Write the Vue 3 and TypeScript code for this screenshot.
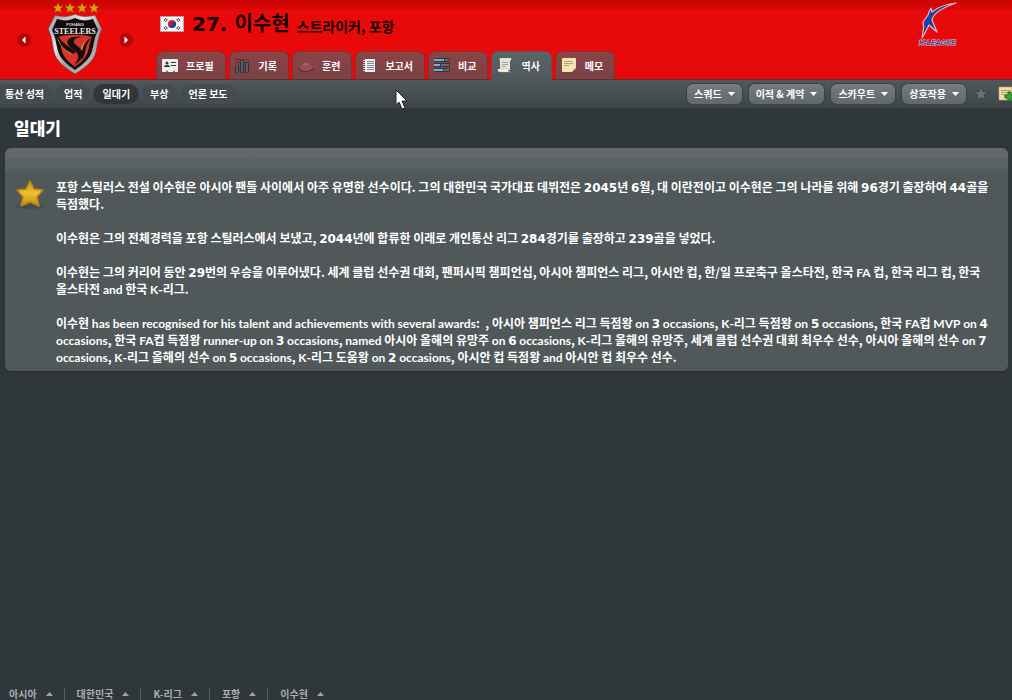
<script setup lang="ts">
interface Tab {
  id: string
  label: string
}
interface Run {
  kind: 'plain' | 'latin' | 'digit'
  text: string
}

const tabs: Tab[] = [
  { id: 'profile', label: '프로필' },
  { id: 'record', label: '기록' },
  { id: 'training', label: '훈련' },
  { id: 'report', label: '보고서' },
  { id: 'compare', label: '비교' },
  { id: 'history', label: '역사' },
  { id: 'memo', label: '메모' },
]
const activeTab = 'history'

const sections: string[] = ['통산 성적', '업적', '일대기', '부상', '언론 보도']
const activeSection = '일대기'

const actions: string[] = ['스쿼드', '이적 & 계약', '스카우트', '상호작용']
const crumbs: string[] = ['아시아', '대한민국', 'K-리그', '포항', '이수현']

const paragraphs: string[][] = [
  [
    '포항 스틸러스 전설 이수현은 아시아 팬들 사이에서 아주 유명한 선수이다. 그의 대한민국 국가대표 데뷔전은 2045년 6월, 대 이란전이고 이수현은 그의 나라를 위해 96경기 출장하여 44골을',
    '득점했다.',
  ],
  ['이수현은 그의 전체경력을 포항 스틸러스에서 보냈고, 2044년에 합류한 이래로 개인통산 리그 284경기를 출장하고 239골을 넣었다.'],
  [
    '이수현는 그의 커리어 동안 29번의 우승을 이루어냈다. 세계 클럽 선수권 대회, 팬퍼시픽 챔피언십, 아시아 챔피언스 리그, 아시안 컵, 한/일 프로축구 올스타전, 한국 FA 컵, 한국 리그 컵, 한국',
    '올스타전 and 한국 K-리그.',
  ],
  [
    '이수현 has been recognised for his talent and achievements with several awards:  , 아시아 챔피언스 리그 득점왕 on 3 occasions, K-리그 득점왕 on 5 occasions, 한국 FA컵 MVP on 4',
    'occasions, 한국 FA컵 득점왕 runner-up on 3 occasions, named 아시아 올해의 유망주 on 6 occasions, K-리그 올해의 유망주, 세계 클럽 선수권 대회 최우수 선수, 아시아 올해의 선수 on 7',
    'occasions, K-리그 올해의 선수 on 5 occasions, K-리그 도움왕 on 2 occasions, 아시안 컵 득점왕 and 아시안 컵 최우수 선수.',
  ],
]

function runs(line: string): Run[] {
  return line
    .split(/([A-Za-z]+(?:-[a-z]+)?|[0-9]+)/)
    .filter((t) => t !== '')
    .map((text) => ({
      text,
      kind: /^[0-9]/.test(text) ? 'digit' : /^[A-Za-z]/.test(text) ? 'latin' : 'plain',
    }))
}

const starPoints = '0,-5 1.4,-1.7 5,-1.5 2.2,0.8 3.1,4.4 0,2.4 -3.1,4.4 -2.2,0.8 -5,-1.5 -1.4,-1.7'
</script>

<template>
  <div class="page">
    <header class="banner">
      <div class="club">
        <button class="step" aria-label="이전 선수">
          <svg width="14" height="14" viewBox="0 0 14 14"><path d="M8.5 3.5v7L5 7z" fill="#fff" /></svg>
        </button>
        <svg class="crest" width="58" height="74" viewBox="0 0 58 74" role="img" aria-label="Pohang Steelers">
          <defs>
            <linearGradient id="steel" x1="0" y1="0" x2="1" y2="1">
              <stop offset="0" stop-color="#8d9498" />
              <stop offset=".35" stop-color="#e4e7e9" />
              <stop offset=".6" stop-color="#9a9fa3" />
              <stop offset="1" stop-color="#c9ccce" />
            </linearGradient>
          </defs>
          <g fill="#d9a514" stroke="#a0700a" stroke-width=".4">
            <polygon v-for="n in 4" :key="n" :points="starPoints" :transform="`translate(${n * 12} 8)`" />
          </g>
          <path d="M29 14C23 17 16 17 9 15L2 29c4 8 4 14 6 23 2 9 11 16 21 22 10-6 19-13 21-22 2-9 2-15 6-23L49 15c-7 2-14 2-20-1z" fill="url(#steel)" stroke="#8c2020" stroke-width=".6" />
          <path d="M29 18c-6 3-12 3-18 1L6 30c4 8 4 14 6 21 2 8 9 13 17 19 8-6 15-11 17-19 2-7 2-13 6-21l-5-11c-6 2-12 2-18-1z" fill="#120c0c" />
          <path d="M12 37c9-3 25-3 34 0-3 7-3 13-5 17-2 5-7 9-12 13-5-4-10-8-12-13-2-4-2-10-5-17z" fill="#d8332c" />
          <path d="M11 37c3 7 11 10 17 15l-3 2c-7-4-12-9-14-17zM46 37c-5 4-8 8-8 15l-4 8c-1-11 2-18 12-23z" fill="#d89a25" />
          <path d="M12 36c5 8 12 11 18 16l-3 2C17 49 13 44 12 36zM36 37c-7 0-10 4-7 7l5 4c5 5 3 11-4 16l-2 2c5-8 6-11 1-15l-5-4c-6-6-1-12 12-10zM46 37c-4 4-6 9-7 16l-3 7c-1-10 1-18 10-23z" fill="#170d0b" />
          <text x="29" y="26" text-anchor="middle" class="crest-top">POHANG</text>
          <text x="29" y="34" text-anchor="middle" class="crest-name">STEELERS</text>
        </svg>
        <button class="step" aria-label="다음 선수">
          <svg width="14" height="14" viewBox="0 0 14 14"><path d="M5.5 3.5v7L9 7z" fill="#fff" /></svg>
        </button>
      </div>

      <div class="identity">
        <div class="heading">
          <svg class="flag" width="24" height="16" viewBox="0 0 24 16" role="img" aria-label="대한민국">
            <rect x=".5" y=".5" width="23" height="15" fill="#f4f4f4" stroke="#b9a9a9" />
            <path d="M8 8a4 4 0 0 1 8 0z" fill="#d5202c" />
            <path d="M8 8a4 4 0 0 0 8 0z" fill="#1d3f8d" />
            <circle cx="10" cy="8" r="2" fill="#d5202c" />
            <circle cx="14" cy="8" r="2" fill="#1d3f8d" />
            <path d="M4 5l2-3M5.5 6l2-3M4 11l2 3M5.5 10l2 3M18 2l2 3M16.5 3l2 3M18 14l2-3M16.5 13l2-3" stroke="#444" />
          </svg>
          <h1>27. 이수현</h1>
          <span class="role">스트라이커, 포항</span>
        </div>
        <nav class="tabs">
          <button v-for="t in tabs" :key="t.id" class="tab" :class="{ active: t.id === activeTab }">
            <svg class="tab-icon" width="18" height="18" viewBox="0 0 18 18" aria-hidden="true">
              <g v-if="t.id === 'profile'">
                <path d="M2 2h14q1 0 1 1v11q0 1-1 1h-2l-1-2-1 2H7l-1-2-1 2H2q-1 0-1-1V3q0-1 1-1z" fill="#eceded" />
                <circle cx="6" cy="6" r="1.5" fill="#333" />
                <path d="M3 10q0-2 3-2t3 2zM10 5h5v1h-5zM10 8h5v1h-5z" fill="#333" />
              </g>
              <g v-else-if="t.id === 'record'">
                <path d="M1 2.5h14M1 5.5h14" stroke="#5f2f31" />
                <rect x="1.5" y="8.5" width="3" height="7" rx="1" fill="#596063" stroke="#2b2f31" />
                <rect x="6.5" y="3.5" width="3" height="12" rx="1" fill="#596063" stroke="#2b2f31" />
                <rect x="11.5" y="5.5" width="3" height="10" rx="1" fill="#596063" stroke="#2b2f31" />
              </g>
              <g v-else-if="t.id === 'training'">
                <ellipse cx="9" cy="12" rx="8" ry="3" fill="#6b3033" />
                <path d="M2 11q2-3 5-5 2-1 4 0 3 2 5 5-3 3-7 3t-7-3z" fill="#985054" />
                <path d="M6 7q3-2 6 0-3 2-6 0z" fill="#ad686a" />
              </g>
              <g v-else-if="t.id === 'report'">
                <path d="M5 2h10v13H5z" fill="#eef0ef" />
                <path d="M7 4.5h7M7 6.5h7M7 8.5h7M7 10.5h7M7 12.5h7" stroke="#858b8e" />
                <path d="M3 3.5h2M3 5.5h2M3 7.5h2M3 9.5h2M3 11.5h2M3 13.5h2" stroke="#c4c8c9" />
              </g>
              <g v-else-if="t.id === 'compare'">
                <rect x="1" y="1" width="16" height="4" rx="1" fill="#303537" />
                <rect x="1" y="6" width="16" height="4" rx="1" fill="#303537" />
                <rect x="1" y="11" width="16" height="4" rx="1" fill="#303537" />
                <path d="M1 2h10v2H1zM1 7h6v2H1zM1 12h9v2H1z" fill="#7fa9d6" />
                <path d="M12 2h4v2h-4zM8 7h8v2H8zM11 12h5v2h-5z" fill="#656c70" />
              </g>
              <g v-else-if="t.id === 'history'">
                <path d="M4 1h11q1 2-1 3v9H4V4Q3 3 4 1z" fill="#e6e3d8" />
                <path d="M2 12h10q0 3 2 3H4q-3 0-2-3z" fill="#f7f3e6" stroke="#b1aea2" stroke-width=".4" />
                <path d="M6 5.500h6M6 7.500h6M6 9.500h4" stroke="#a3a49c" />
              </g>
              <g v-else>
                <path d="M3 1h12q1 0 1 1v9l-4 4H3q-1 0-1-1V2q0-1 1-1z" fill="#f3e4b3" />
                <path d="M12 15q1-3 4-4z" fill="#c9b57b" />
                <path d="M4 4.5h9M4 6.5h9M4 8.5h5" stroke="#b7a46f" />
              </g>
            </svg>
            <span>{{ t.label }}</span>
          </button>
        </nav>
      </div>

      <svg class="league" width="42" height="48" viewBox="0 0 42 48" role="img" aria-label="K-League">
        <path d="M38 2C29 3 20 6 14 11l-1-4-2 4-1 3-5 7c1 4 1 7 0 10l-1 6c3-4 4-8 7-13l8 7-5-12c1-7 10-12 24-17z" fill="#1e3fa0" stroke="#e9bcc4" stroke-width="1.2" stroke-linejoin="round" />
        <text x="1" y="44" class="league-name">K-LEAGUE</text>
      </svg>
    </header>

    <div class="toolbar">
      <nav class="sections">
        <button v-for="s in sections" :key="s" class="section" :class="{ active: s === activeSection }">{{ s }}</button>
      </nav>
      <div class="actions">
        <button v-for="a in actions" :key="a" class="action">
          <span>{{ a }}</span>
          <svg width="7" height="4" viewBox="0 0 7 4" aria-hidden="true"><path d="M0 0h7L3.5 4z" fill="#fff" /></svg>
        </button>
        <button class="bare" aria-label="즐겨찾기">
          <svg width="16" height="16" viewBox="-6 -6 12 12"><polygon :points="starPoints" fill="#6d7477" stroke="#353c3f" stroke-width=".5" /></svg>
        </button>
        <button class="bare note" aria-label="메모 추가">
          <svg width="18" height="16" viewBox="0 0 18 16">
            <path d="M1 1h13v13H1z" fill="#f2dda3" stroke="#bda66a" stroke-width=".6" />
            <path d="M3 4.5h9M3 6.5h7M3 8.5h5" stroke="#b79f63" />
            <path d="M10 6h3v3h3v3h-3v3h-3v-3H7V9h3z" fill="#2fae3c" stroke="#126a1d" />
          </svg>
        </button>
      </div>
    </div>

    <main class="content">
      <h2>일대기</h2>
      <article class="panel">
        <svg class="gold-star" width="30" height="32" viewBox="1 0 30 32" aria-hidden="true">
          <defs>
            <linearGradient id="gold" x1="0" y1="0" x2="0" y2="1">
              <stop offset="0" stop-color="#c99a12" />
              <stop offset=".5" stop-color="#ebc030" />
              <stop offset="1" stop-color="#c58a06" />
            </linearGradient>
          </defs>
          <ellipse cx="16" cy="28" rx="14" ry="3" fill="#444d51" />
          <path d="M16 3l4 8 9 1-6 7 2 9-9-4-9 4 2-9-6-7 9-1z" fill="url(#gold)" stroke="#b5850f" stroke-width="1.5" stroke-linejoin="round" />
        </svg>
        <div class="story">
          <p v-for="(p, i) in paragraphs" :key="i">
            <span v-for="(line, j) in p" :key="j" class="line"><span v-for="(r, k) in runs(line)" :key="k" :class="r.kind">{{ r.text }}</span></span>
          </p>
        </div>
      </article>
    </main>

    <footer class="crumbs">
      <button v-for="c in crumbs" :key="c" class="crumb">
        <span>{{ c }}</span>
        <svg width="7" height="4" viewBox="0 0 7 4" aria-hidden="true"><path d="M0 4h7L3.5 0z" fill="#9ea4a6" /></svg>
      </button>
    </footer>

    <svg class="pointer" width="14" height="21" viewBox="0 0 14 21" aria-hidden="true">
      <path d="M1 1v15l3-3 3 7 3-1-3-7h5z" fill="#fff" stroke="#222" />
    </svg>
  </div>
</template>

<style>
body {
  margin: 0;
  background: #30373a;
}
</style>

<style scoped>
.page {
  position: relative;
  display: flex;
  flex-direction: column;
  height: 100vh;
  overflow: hidden;
  background: #30373a;
  color: #fff;
  font-family: "Noto Sans CJK KR", sans-serif;
  font-size: 10px;
  font-weight: 700;
}
button {
  margin: 0;
  padding: 0;
  border: 0;
  background: none;
  color: inherit;
  font: inherit;
  white-space: nowrap;
}
svg {
  display: block;
  flex: none;
}
.banner {
  display: flex;
  height: 79px;
  flex: none;
  background: linear-gradient(#cb0505, #d80606 8px, #e80a0a 11px);
  border-bottom: 1px solid #6b2a2a;
}
.club {
  display: flex;
  justify-content: space-between;
  box-sizing: border-box;
  width: 156px;
  padding: 0 23px 0 17px;
}
.step {
  width: 14px;
  height: 14px;
  margin-top: 33px;
  border-radius: 50%;
  background: #b50909;
}
.crest-top {
  fill: #ddd;
  font: 700 4px "Liberation Sans", sans-serif;
}
.crest-name {
  fill: #e8e8e8;
  font: 700 8px "Liberation Serif", serif;
}
.identity {
  display: flex;
  flex: 1;
  flex-direction: column;
  justify-content: space-between;
}
.heading {
  display: flex;
  align-items: center;
  height: 48px;
  padding-left: 4px;
  color: #160000;
}
h1 {
  margin: 0 7px 0 8px;
  font: 700 20px/30px "DejaVu Sans", "Noto Sans CJK KR", sans-serif;
}
.role {
  padding-top: 4px;
  font-size: 14px;
  line-height: 20px;
}
.tabs {
  display: flex;
  gap: 3px;
}
.tab {
  display: flex;
  align-items: center;
  gap: 7px;
  box-sizing: border-box;
  height: 28px;
  padding: 0 11px 0 4px;
  border: 1px solid #8f2a2b;
  border-bottom: 0;
  border-radius: 7px 7px 0 0;
  background: linear-gradient(#8a4447, #794346);
}
.tab span {
  padding-bottom: 1px;
}
.tab.active {
  height: 29px;
  margin-bottom: -1px;
  border-color: #6a4b4d;
  background: linear-gradient(#59656a, #50585b);
}
.league {
  margin: 1px 52px 0 0;
}
.league-name {
  fill: #1e3fa0;
  stroke: #e9bcc4;
  stroke-width: 1px;
  paint-order: stroke;
  font: italic 700 7px "Liberation Sans", sans-serif;
}
.toolbar {
  display: flex;
  align-items: center;
  justify-content: space-between;
  height: 28px;
  flex: none;
  background: linear-gradient(#50585b, #3e4548);
}
.sections {
  display: flex;
  gap: 2px;
  margin-left: -4px;
}
.section {
  height: 20px;
  padding: 0 9px 2px;
  border-radius: 10px;
  background: #454c50;
  box-shadow: 0 0 1px #5b6366;
}
.section.active {
  background: #30363a;
}
.actions {
  display: flex;
  align-items: center;
  gap: 7px;
  margin-right: -4px;
}
.action {
  display: flex;
  align-items: center;
  gap: 6px;
  height: 20px;
  padding: 0 7px;
  border-radius: 6px;
  background: linear-gradient(#747c82, #60686c);
  box-shadow: 0 0 1px 1px #3a4144;
}
.action span {
  padding-bottom: 1px;
}
.note {
  margin-left: 2px;
}
.content {
  flex: 1;
  padding: 0 4px 0 5px;
}
h2 {
  margin: 0;
  padding: 8px 9px;
  font-size: 17px;
  line-height: 24px;
  font-weight: 900;
}
.panel {
  display: flex;
  gap: 11px;
  padding: 30px 9px 6px 10px;
  border-radius: 6px;
  background: linear-gradient(#65696b, #62676a 9px, #586268 10px, #5b6063 16px, #525d65 24px, #50585a 25px);
  box-shadow: 0 1px 2px #262c2f;
}
.story {
  font-size: 12px;
  line-height: 17px;
}
.story p {
  margin: 0 0 17px;
}
.story p:last-child {
  margin: 0;
}
.line {
  display: block;
  height: 17px;
  white-space: pre;
}
.latin {
  font-family: Lato, sans-serif;
}
.digit {
  font-family: "DejaVu Sans", sans-serif;
}
.crumbs {
  display: flex;
  flex: none;
  height: 12px;
  padding-left: 9px;
  color: #a9aeb0;
  line-height: 12px;
}
.crumb {
  display: flex;
  align-items: center;
  gap: 9px;
  margin-right: 12px;
  padding-right: 11px;
  border-right: 1px solid #555d60;
}
.crumb:last-child {
  border-right: 0;
}
.pointer {
  position: absolute;
  left: 395px;
  top: 89px;
}
</style>
